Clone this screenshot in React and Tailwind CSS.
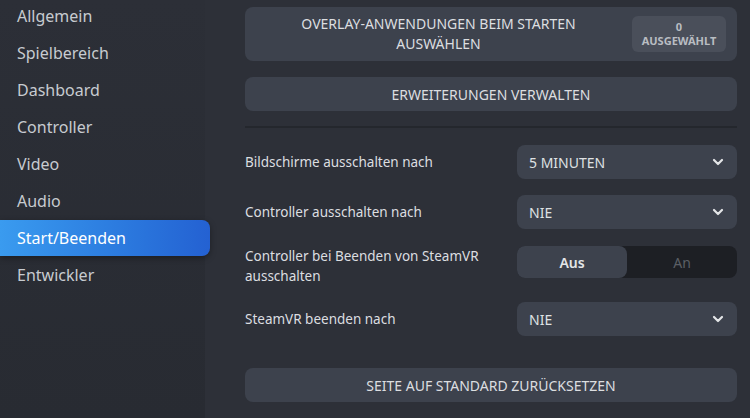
import React from 'react'

const nav = ['Allgemein', 'Spielbereich', 'Dashboard', 'Controller', 'Video', 'Audio', 'Start/Beenden', 'Entwickler']

const Chevron = () => (
  <svg width="14" height="14" viewBox="0 0 14 14" fill="none">
    <path d="M3 5l4 4 4-4" stroke="#e4e6e8" strokeWidth="2.2" strokeLinecap="round" strokeLinejoin="round" />
  </svg>
)

const Dropdown = ({ value }) => (
  <div className="w-[220px] h-[34px] rounded-lg bg-[#3d424d] flex items-center justify-between pl-3 pr-3 text-[14px] text-[#dfe1e3]">
    <span>{value}</span>
    <Chevron />
  </div>
)

const Row = ({ label, children, className = '', labelClass = '' }) => (
  <div className={`flex items-center justify-between ${className}`}>
    <div className={`text-[13.5px] leading-[20px] text-[#dcdee0] w-[260px] ${labelClass}`}>{label}</div>
    {children}
  </div>
)

export default function App() {
  return (
    <div className="w-[750px] h-[418px] flex overflow-hidden bg-[#2d3038]" style={{ fontFamily: '"Noto Sans", sans-serif' }}>
      {/* sidebar */}
      <div className="w-[205px] shrink-0 bg-gradient-to-b from-[#2c2f37] to-[#282b32] relative z-10">
        <div className="flex flex-col -mt-[3px]">
          {nav.map((n) => (
            <div
              key={n}
              className={
                n === 'Start/Beenden'
                  ? 'h-[36px] w-[210px] flex items-center pl-[17px] text-[16px] text-white rounded-r-lg bg-gradient-to-r from-[#3a9bef] to-[#2461d2] shadow-[0_2px_6px_rgba(0,0,0,0.35)] my-[0.5px]'
                  : 'h-[37px] flex items-center pl-[17px] text-[16px] text-[#c7cbd0]'
              }
            >
              {n}
            </div>
          ))}
        </div>
      </div>

      {/* main */}
      <div className="flex-1 pl-[40px] pr-[13px] pt-[7px]">
        <div className="h-[54px] rounded-lg bg-[#3d424d] flex items-center pr-[11px]">
          <div className="flex-1 text-center text-[14px] leading-[20px] text-[#dcdee0] px-4">
            OVERLAY-ANWENDUNGEN BEIM STARTEN<br />AUSWÄHLEN
          </div>
          <div className="w-[94px] h-[36px] rounded-md bg-[#4a4f5a] flex flex-col items-center justify-center text-[11px] leading-[14px] font-bold text-[#b9bdc2]">
            <span>0</span>
            <span>AUSGEWÄHLT</span>
          </div>
        </div>

        <div className="mt-[16px] h-[34px] rounded-lg bg-[#3d424d] flex items-center justify-center text-[14px] text-[#dcdee0]">
          ERWEITERUNGEN VERWALTEN
        </div>

        <div className="mt-[15px] h-[2px] bg-[#24272d]" />

        <Row label="Bildschirme ausschalten nach" className="mt-[17px]">
          <Dropdown value="5 MINUTEN" />
        </Row>

        <Row label="Controller ausschalten nach" className="mt-[16px]">
          <Dropdown value="NIE" />
        </Row>

        <Row label="Controller bei Beenden von SteamVR ausschalten" className="mt-[13px]" labelClass="translate-y-[4px]">
          <div className="w-[220px] h-[32px] rounded-lg bg-[#1d1f24] flex text-[14px]">
            <div className="w-[110px] rounded-lg bg-[#3d424d] flex items-center justify-center font-semibold text-[#e4e6e8]">Aus</div>
            <div className="flex-1 flex items-center justify-center text-[#5b5f66]">An</div>
          </div>
        </Row>

        <Row label="SteamVR beenden nach" className="mt-[20px]">
          <Dropdown value="NIE" />
        </Row>

        <div className="mt-[32px] h-[34px] rounded-lg bg-[#3d424d] flex items-center justify-center text-[14px] text-[#dcdee0]">
          SEITE AUF STANDARD ZURÜCKSETZEN
        </div>
      </div>
    </div>
  )
}
